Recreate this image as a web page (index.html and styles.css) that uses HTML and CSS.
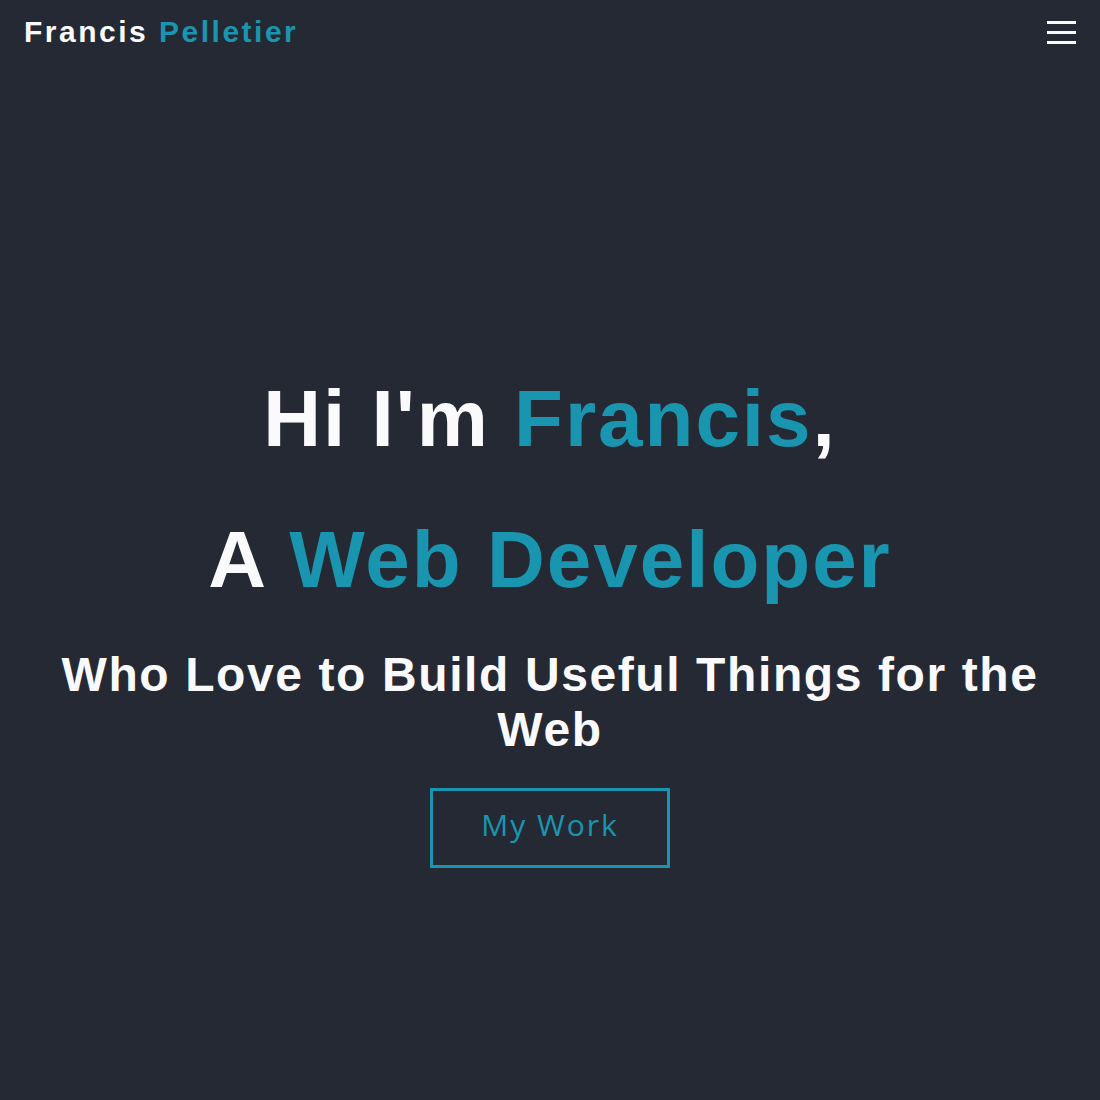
FILE: index.html
```html
<!DOCTYPE html>
<html lang="en">
<head>
<meta charset="utf-8">
<title>Francis Pelletier</title>
<link rel="stylesheet" href="styles.css">
</head>
<body>
<header class="nav">
  <a class="brand" href="#">Francis <span class="accent">Pelletier</span></a>
  <button class="burger" aria-label="Menu"><span></span><span></span><span></span></button>
</header>
<main class="hero">
  <h1 class="title">Hi I'm <span class="accent">Francis</span>,</h1>
  <h1 class="title second">A <span class="accent">Web Developer</span></h1>
  <h2 class="subtitle">Who Love to Build Useful Things for the Web</h2>
  <a class="cta" href="#">My Work</a>
</main>
</body>
</html>
```
FILE: styles.css
```css
html, body {
  margin: 0;
  padding: 0;
  background: #252934;
  height: 100%;
}
body {
  font-family: "Liberation Sans", Arial, sans-serif;
  color: #fafafc;
}
.accent { color: #1a95b0; }
.nav {
  height: 64px;
  display: flex;
  align-items: center;
  justify-content: space-between;
  padding: 0 24px;
}
.brand {
  font-size: 30px;
  font-weight: bold;
  letter-spacing: 2.5px;
  color: #fafafc;
  text-decoration: none;
}
.burger {
  background: none;
  border: 0;
  padding: 0;
  width: 29px;
  display: flex;
  flex-direction: column;
  gap: 7px;
}
.burger span {
  display: block;
  height: 3px;
  width: 29px;
  background: #fafafc;
}
.hero {
  display: flex;
  flex-direction: column;
  align-items: center;
  text-align: center;
  padding: 309px 40px 0;
}
.title {
  margin: 0;
  font-size: 80px;
  font-weight: bold;
  letter-spacing: 2px;
  line-height: normal;
}
.second { margin-top: 49px; }
.subtitle {
  margin: 41px 0 0;
  font-size: 48px;
  font-weight: bold;
  letter-spacing: 1.6px;
  line-height: normal;
}
.cta {
  margin-top: 31px;
  box-sizing: border-box;
  width: 240px;
  height: 80px;
  padding-bottom: 8px;
  border: 3px solid #1a95b0;
  color: #1a95b0;
  font-family: "Open Sans", "Noto Sans", sans-serif;
  font-size: 30px;
  letter-spacing: 2px;
  text-decoration: none;
  display: flex;
  align-items: center;
  justify-content: center;
}
```
